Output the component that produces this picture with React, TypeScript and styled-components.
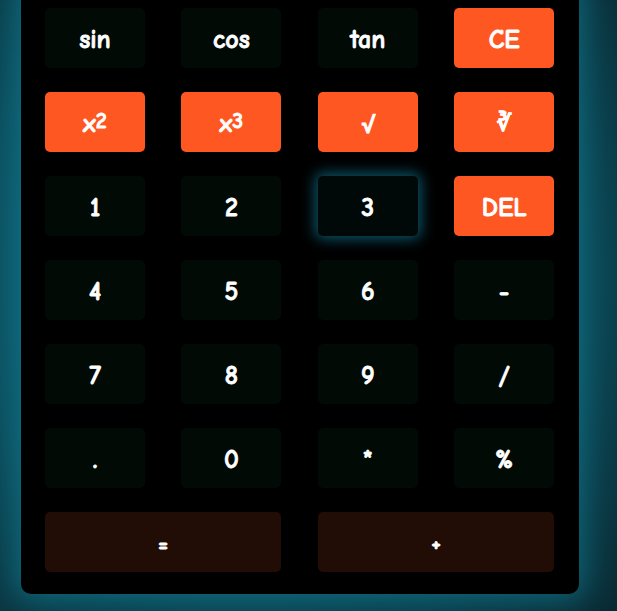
import React from "react";
import styled, { createGlobalStyle, css } from "styled-components";

const Global = createGlobalStyle`
  html, body {
    margin: 0;
    padding: 0;
    background: #0a2c35;
    overflow: hidden;
  }
  body {
    font-family: "Comic Sans MS", "Comic Neue", "Open Sans", "Noto Sans", sans-serif;
  }
`;

const Page = styled.div`
  width: 617px;
  height: 611px;
  overflow: hidden;
  background: radial-gradient(ellipse at 40% 45%, #0f6678 0%, #0c4d5c 55%, #0a2a33 100%);
`;

const Calculator = styled.div`
  margin: -20px 0 0 21px;
  width: 558px;
  box-sizing: border-box;
  padding: 28px 24px 22px 24px;
  background: #000000;
  border-radius: 10px;
  box-shadow: 0 0 30px 6px rgba(16, 140, 165, 0.55);
  display: grid;
  grid-template-columns: repeat(4, 100px);
  column-gap: 36.4px;
  row-gap: 24px;
`;

type Variant = "dark" | "orange" | "brown";

const Key = styled.button<{ $variant: Variant; $wide?: boolean; $active?: boolean }>`
  height: 60px;
  border: none;
  border-radius: 5px;
  color: #ffffff;
  font-family: inherit;
  font-weight: 700;
  font-size: 26px;
  -webkit-text-stroke: 0.8px #ffffff;
  display: flex;
  align-items: center;
  justify-content: center;
  padding: 3px 0 0;
  box-sizing: border-box;
  cursor: pointer;
  background: ${(p) =>
    p.$variant === "orange" ? "#ff5722" : p.$variant === "brown" ? "#210c06" : "#010a05"};
  ${(p) =>
    p.$wide &&
    css`
      grid-column: span 2;
      font-size: 22px;
    `}
  ${(p) =>
    p.$active &&
    css`
      background: #000908;
      box-shadow: 0 0 14px 3px rgba(18, 130, 160, 0.65);
    `}
`;

const Sup = styled.sup`
  font-size: 0.85em;
  line-height: 0;
  position: relative;
  top: -0.1em;
`;

const Root = styled.span`
  font-size: 0.85em;
`;

type K = { label: React.ReactNode; v: Variant; wide?: boolean; active?: boolean };

const keys: K[] = [
  { label: "sin", v: "dark" },
  { label: "cos", v: "dark" },
  { label: "tan", v: "dark" },
  { label: "CE", v: "orange" },
  { label: <>x<Sup>2</Sup></>, v: "orange" },
  { label: <>x<Sup>3</Sup></>, v: "orange" },
  { label: <Root>√</Root>, v: "orange" },
  { label: <Root>∛</Root>, v: "orange" },
  { label: "1", v: "dark" },
  { label: "2", v: "dark" },
  { label: "3", v: "dark", active: true },
  { label: "DEL", v: "orange" },
  { label: "4", v: "dark" },
  { label: "5", v: "dark" },
  { label: "6", v: "dark" },
  { label: "-", v: "dark" },
  { label: "7", v: "dark" },
  { label: "8", v: "dark" },
  { label: "9", v: "dark" },
  { label: "/", v: "dark" },
  { label: ".", v: "dark" },
  { label: "0", v: "dark" },
  { label: "*", v: "dark" },
  { label: "%", v: "dark" },
  { label: "=", v: "brown", wide: true },
  { label: "+", v: "brown", wide: true },
];

export default function App() {
  return (
    <>
      <Global />
      <Page>
        <Calculator>
          {keys.map((k, i) => (
            <Key key={i} $variant={k.v} $wide={k.wide} $active={k.active}>
              {k.label}
            </Key>
          ))}
        </Calculator>
      </Page>
    </>
  );
}
